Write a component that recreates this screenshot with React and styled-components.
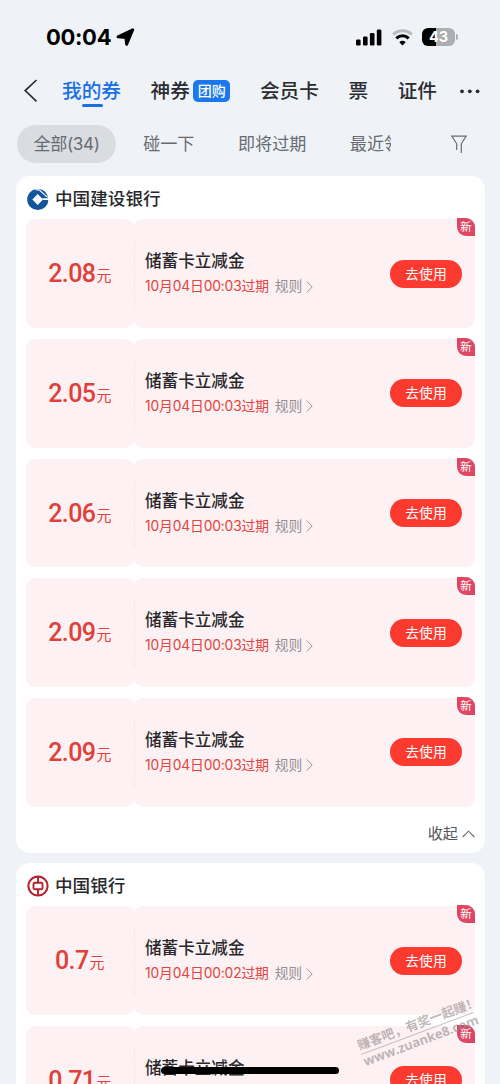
import React from 'react';
import styled, { createGlobalStyle } from 'styled-components';

const GlobalStyle = createGlobalStyle`
* {
  box-sizing: border-box;
}
body {
  margin: 0;
  background: #eff3f8;
  font-family: Inter, 'Noto Sans CJK SC', sans-serif;
}
button {
  border: none;
  padding: 0;
  font-family: inherit;
  cursor: pointer;
}
svg {
  display: block;
  flex-shrink: 0;
}
`;

const Page = styled.div`
position: relative;
width: 500px;
height: 1084px;
overflow: hidden;
background: #eff3f8;
`;

const StatusBar = styled.div`
display: flex;
align-items: center;
height: 70px;
padding: 4px 42px 0 46px;
.time {
  width: 65px;
  font-size: 22px;
  font-weight: 700;
  line-height: 30px;
  letter-spacing: -0.3px;
  color: #000;
}
.arrow {
  margin-left: 5px;
}
.signal {
  margin-left: auto;
}
.wifi {
  margin-left: 10px;
}
.battery {
  margin-left: 9px;
}
`;

const Battery = styled.div`
display: flex;
align-items: center;
gap: 1px;
.level {
  width: 33px;
  height: 18px;
  border-radius: 6px;
  background: linear-gradient(90deg, #000 43%, #acaeb1 43%);
  color: #fff;
  font-size: 14.5px;
  font-weight: 700;
  line-height: 18px;
  text-align: center;
}
.tip {
  width: 2px;
  height: 6px;
  border-radius: 0 2px 2px 0;
  background: #acaeb1;
}
`;

const NavBar = styled.div`
display: flex;
align-items: center;
height: 42px;
padding: 0 20px 0 23px;
.more {
  margin-left: auto;
}
`;

const Tabs = styled.div`
display: flex;
align-items: center;
gap: 29.5px;
margin-left: 24px;
`;

const Tab = styled.div`
position: relative;
display: flex;
align-items: center;
gap: 3px;
white-space: nowrap;
font-size: 19.7px;
font-weight: 500;
line-height: 30px;
color: ${(props) => (props.$active ? '#1a6fe8' : '#2b2d31')};
&::after {
  content: "";
  display: ${(props) => (props.$active ? 'block' : 'none')};
  position: absolute;
  left: 50%;
  bottom: -1px;
  width: 21px;
  height: 3px;
  margin-left: -10px;
  border-radius: 2px;
  background: #1a6fe8;
}
`;

const TabBadge = styled.span`
width: 37.5px;
height: 22px;
margin-top: -1px;
border-radius: 5px;
background: #1b77ee;
color: #fff;
font-size: 14px;
font-weight: 500;
line-height: 22px;
text-align: center;
`;

const FilterBar = styled.div`
display: flex;
align-items: center;
height: 64px;
padding: 0 33px 0 17px;
.funnel {
  margin-left: auto;
}
`;

const Filters = styled.div`
display: flex;
gap: 10.5px;
width: 374px;
overflow: hidden;
`;

const Filter = styled.div`
flex-shrink: 0;
height: 38px;
padding: 0 16.5px;
border-radius: 19px;
background: ${(props) => (props.$active ? '#d9dce1' : 'transparent')};
color: #686b70;
font-size: 17.1px;
font-weight: 400;
line-height: 37px;
letter-spacing: ${(props) => (props.$active ? '-0.35px' : '0')};
`;

const Card = styled.section`
width: 469.5px;
height: ${(props) => props.$height};
margin: 0 0 10.5px 15.5px;
padding: 0 10px;
border-radius: 14px;
background: #fff;
`;

const BankTitle = styled.div`
display: flex;
align-items: center;
gap: 6.5px;
height: 43.2px;
padding: 3px 0 0 1px;
color: #26282c;
font-size: 17.6px;
font-weight: 500;
line-height: 26px;
`;

const CouponList = styled.div`
display: flex;
flex-direction: column;
gap: 10.8px;
`;

const CouponRow = styled.div`
position: relative;
display: flex;
height: 108.9px;
`;

const Amount = styled.div`
display: flex;
align-items: flex-start;
justify-content: center;
gap: 1px;
width: 108.5px;
padding-top: 37px;
border-radius: 9px;
background: #fef1f3;
color: #e0403a;
.value {
  font-family: Roboto, sans-serif;
  font-size: 25px;
  font-weight: 500;
  line-height: 36px;
  letter-spacing: -0.6px;
}
.unit {
  padding-top: 2px;
  font-size: 14.9px;
  font-weight: 400;
  line-height: 36px;
}
`;

const Info = styled.div`
display: flex;
flex: 1;
align-items: center;
justify-content: space-between;
padding: 0 13px 0 11px;
border-radius: 9px;
background: #fef1f3;
h3 {
  margin: 0;
  color: #26282c;
  font-size: 16.6px;
  font-weight: 500;
  line-height: 26px;
}
p {
  display: flex;
  align-items: center;
  margin: 0;
  font-size: 13.8px;
  line-height: 25px;
  letter-spacing: -0.15px;
  color: #e2453f;
  white-space: nowrap;
}
.rule {
  margin: 0 4px 0 6px;
  color: #929095;
}
`;

const Perforation = styled.span`
position: absolute;
left: 108px;
top: 22px;
bottom: 20px;
border-left: 1px dashed #fae0e4;
`;

const UseButton = styled.button`
width: 72px;
height: 28px;
border-radius: 14px;
background: #fd3a30;
color: #fff;
font-size: 13.8px;
font-weight: 400;
line-height: 28px;
`;

const NewTag = styled.span`
position: absolute;
top: -1px;
right: 0;
width: 18px;
height: 18px;
border-radius: 0 9px 0 9px;
background: #df4662;
color: #fff;
font-size: 11.5px;
line-height: 18px;
text-align: center;
`;

const Collapse = styled.div`
display: flex;
align-items: center;
justify-content: flex-end;
gap: 4px;
height: 52px;
padding-top: 2px;
color: #55575b;
font-size: 15.2px;
line-height: 24px;
`;

const Watermark = styled.div`
position: absolute;
left: 357px;
top: 1016px;
width: 120px;
transform: rotate(-20.5deg);
color: rgba(148, 139, 143, 0.62);
font-size: 12.8px;
font-weight: 700;
line-height: 17px;
white-space: nowrap;
.slogan {
  border-bottom: 1px solid rgba(148, 139, 143, 0.5);
}
.site {
  font-family: 'Open Sans', sans-serif;
  font-size: 12.9px;
  line-height: 15px;
}
`;

const HomeIndicator = styled.div`
position: absolute;
left: 161px;
top: 1067px;
width: 178px;
height: 7px;
border-radius: 4px;
background: #000;
`;

const CcbLogo = () => (
  <svg width="22" height="23" viewBox="0 0 22 23">
    <circle cx="10.8" cy="11.5" r="10.6" fill="#14549b" />
    <path d="M10.7 6 16 11.5 10.7 17 5.4 11.5Z" fill="#fff" />
    <path d="M14.8 10.2 16.5 12 22 12 22 10.2Z" fill="#fff" />
    <path d="M8.6 1.6 12.4 2 20.6 9.4" stroke="#fff" strokeWidth="1.1" fill="none" />
  </svg>
);

const BocLogo = () => (
  <svg width="22" height="22" viewBox="0 0 22 22" fill="none" stroke="#b5232f">
    <circle cx="11" cy="11" r="9.6" strokeWidth="2" />
    <rect x="6.5" y="7.7" width="9" height="6.6" rx="1.2" strokeWidth="1.9" />
    <path d="M11 2v5.5M11 14.5V20" strokeWidth="1.9" />
  </svg>
);

const Coupon = ({ amount, time }) => (
  <CouponRow>
    <Amount>
      <span className="value">{amount}</span>
      <span className="unit">元</span>
    </Amount>
    <Info>
      <div>
        <h3>储蓄卡立减金</h3>
        <p>
          10月04日{time}过期
          <span className="rule">规则</span>
          <svg width="7" height="12" viewBox="0 0 7 12" fill="none" stroke="#99969b">
            <path d="M.7.5 6.2 6 .7 11.5" />
          </svg>
        </p>
      </div>
      <UseButton>去使用</UseButton>
    </Info>
    <Perforation />
    <NewTag>新</NewTag>
  </CouponRow>
);

const ccbCoupons = ['2.08', '2.05', '2.06', '2.09', '2.09'];
const bocCoupons = ['0.7', '0.71'];

const App = () => {
  return (
    <>
      <GlobalStyle />
      <Page>
        <StatusBar>
          <div className="time">00:04</div>
          <svg className="arrow" width="19" height="19" viewBox="0 0 19 19">
            <path d="M16.8 1.8 10.6 16.4 9.8 9.6 2 8.8Z" fill="#000" stroke="#000" strokeWidth="2.8" strokeLinejoin="round" />
          </svg>
          <svg className="signal" width="26" height="17" viewBox="0 0 26 17">
            <rect x="0" y="10.5" width="4.6" height="6" rx="1.3" />
            <rect x="7" y="7.5" width="4.6" height="9" rx="1.3" />
            <rect x="13.9" y="4" width="4.6" height="12.5" rx="1.3" />
            <rect x="20.8" y="0.5" width="4.6" height="16" rx="1.3" />
          </svg>
          <svg className="wifi" width="21" height="17" viewBox="0 0 21 17" fill="none" strokeWidth="3">
            <path d="M1.2 5.5a13.3 13.3 0 0 1 18.6 0" stroke="#b9bcc1" />
            <path d="M4.3 9.3a8.9 8.9 0 0 1 12.4 0" stroke="#000" />
            <path d="M10.5 16.5 7.3 13.2a4.5 4.5 0 0 1 6.4 0Z" fill="#000" />
          </svg>
          <Battery className="battery">
            <div className="level">43</div>
            <div className="tip" />
          </Battery>
        </StatusBar>

        <NavBar>
          <svg width="15" height="24" viewBox="0 0 15 24" fill="none" stroke="#2b2d31" strokeWidth="1.7">
            <path d="M13.5 1 2.2 11.6 13.5 22.3" />
          </svg>
          <Tabs>
            <Tab $active>我的券</Tab>
            <Tab>神券<TabBadge>团购</TabBadge></Tab>
            <Tab>会员卡</Tab>
            <Tab>票</Tab>
            <Tab>证件</Tab>
          </Tabs>
          <svg className="more" width="20" height="5" viewBox="0 0 20 5" fill="#2b2d31">
            <circle cx="2" cy="2.3" r="1.9" />
            <circle cx="9.8" cy="2.3" r="1.9" />
            <circle cx="17.6" cy="2.3" r="1.9" />
          </svg>
        </NavBar>

        <FilterBar>
          <Filters>
            <Filter $active>全部(34)</Filter>
            <Filter>碰一下</Filter>
            <Filter>即将过期</Filter>
            <Filter>最近领取</Filter>
          </Filters>
          <svg className="funnel" width="16" height="19" viewBox="0 0 16 19" fill="none" stroke="#686b70" strokeWidth="1.2">
            <path d="M5.7 15V8.8L.9 1.2h14.2l-4.8 7.6V18" />
          </svg>
        </FilterBar>

        <Card $height="676.5px">
          <BankTitle><CcbLogo />中国建设银行</BankTitle>
          <CouponList>
            {ccbCoupons.map((amount, index) => (
              <Coupon key={index} amount={amount} time="00:03" />
            ))}
          </CouponList>
          <Collapse>
            收起
            <svg width="13" height="8" viewBox="0 0 13 8" fill="none" stroke="#66686c" strokeWidth="1.1">
              <path d="M.7 7 6.5 1.2 12.3 7" />
            </svg>
          </Collapse>
        </Card>

        <Card $height="300px">
          <BankTitle><BocLogo />中国银行</BankTitle>
          <CouponList>
            {bocCoupons.map((amount) => (
              <Coupon key={amount} amount={amount} time="00:02" />
            ))}
          </CouponList>
        </Card>

        <Watermark>
          <div className="slogan">赚客吧，有奖一起赚！</div>
          <div className="site">www.zuanke8.com</div>
        </Watermark>
        <HomeIndicator />
      </Page>
    </>
  );
};

export default App;
